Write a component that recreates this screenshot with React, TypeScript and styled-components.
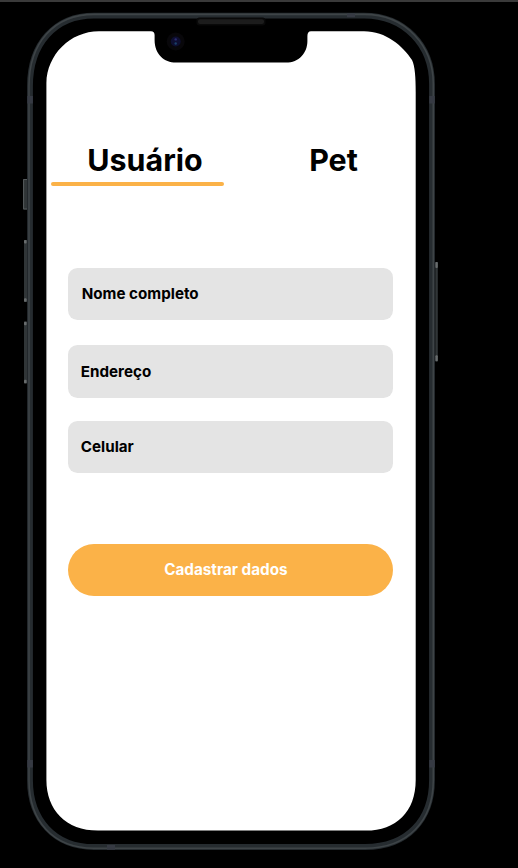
import React from "react";
import styled, { createGlobalStyle } from "styled-components";

const GlobalStyle = createGlobalStyle`
  * { box-sizing: border-box; }
  body { margin: 0; background: #000; font-family: Inter, "Liberation Sans", sans-serif; }
`;

const Stage = styled.main`
  position: relative;
  width: 518px;
  height: 868px;
  overflow: hidden;
  background: #000;
  border-top: 2px solid #3a3a3a;
  padding: 28px 0 0 46px;
`;

const Hardware = styled.svg`
  position: absolute;
  left: 0;
  top: -2px;
  pointer-events: none;
`;

const Screen = styled.section`
  position: relative;
  width: 370px;
  height: 801px;
  background: #fff;
  clip-path: path("M0.4 53 C0.8 25 24 1.2 53 1.2 H105 Q108.6 1.2 108.6 5 V10 C108.6 24 118 32.6 130 32.6 H240 C253 32.6 261.4 23 261.4 11 V6 Q261.4 1.2 265 1.2 H318 C340 1.2 357 16 366 30 C369 36 369.7 48 369.7 62 V750 C369.7 782 350 800.6 320 800.6 H52 C20 800.6 0.4 780 0.4 750 Z");
  display: flex;
  flex-direction: column;
  padding: 113px 22px 0 5px;
`;

const Tabs = styled.nav`
  display: flex;
  gap: 28px;
`;

const Tab = styled.button<{ $active?: boolean }>`
  flex: none;
  width: ${(p) => (p.$active ? 173 : 163)}px;
  height: 43px;
  border: 0;
  padding: 0;
  background: none;
  color: #000;
  font: 700 30.4px/34px Inter, sans-serif;
  display: flex;
  flex-direction: column;
  align-items: center;
  justify-content: space-between;

  span { padding-left: ${(p) => (p.$active ? 15 : 0)}px; }

  &::after {
    content: "";
    width: 100%;
    height: 4px;
    border-radius: 2px;
    background: ${(p) => (p.$active ? "#fbb248" : "transparent")};
  }
`;

const Form = styled.form`
  display: flex;
  flex-direction: column;
  width: 324.5px;
  margin: 81.6px 0 0 17.4px;
`;

const Field = styled.label<{ $gap: number; $inset: number }>`
  display: flex;
  align-items: center;
  height: 52.2px;
  margin-bottom: ${(p) => p.$gap}px;
  padding-left: ${(p) => p.$inset}px;
  border-radius: 9.5px;
  background: #e4e4e4;
  color: #000;
  font: 700 15.2px/20px Inter, sans-serif;
`;

const Submit = styled.button`
  height: 52.2px;
  padding: 0 9.5px 0 0;
  border: 0;
  border-radius: 27px;
  background: #fbb248;
  color: #fff;
  font: 700 15.25px/20px Inter, sans-serif;
`;

const FRAME =
  "M30 86 C30 44 55 15.6 94 15.6 H364 C405 15.6 432 46 432 84 V780 C432 819 408 847 365 847 H94 C54 847 30 819 30 780 Z";
const FRAME_EDGE =
  "M29 86 C29 43 54 14.4 94 14.4 H364 C406 14.4 433.3 46 433.3 84 V780 C433.3 821 408 848.2 365 848.2 H94 C53 848.2 29 821 29 780 Z";

function PhoneHardware() {
  return (
    <Hardware width="518" height="868" viewBox="0 0 518 868" fill="none" aria-hidden="true">
      <path d={FRAME} stroke="#262c30" strokeWidth="5.8" />
      <path d={FRAME_EDGE} stroke="#3e4447" strokeWidth="1.6" />
      {/* antenna bands */}
      <g fill="#363a43">
        <rect x="27.3" y="96" width="5.6" height="7.5" />
        <rect x="429.3" y="96" width="5.5" height="7.5" />
        <rect x="27.3" y="760" width="5.6" height="7.5" />
        <rect x="429.3" y="760" width="5.5" height="7.5" />
        <rect x="347" y="13.2" width="8" height="4" />
        <rect x="107" y="845" width="8" height="4.8" />
      </g>
      {/* side buttons */}
      <g fill="#303537">
        <rect x="23" y="179" width="4" height="30.5" />
        <rect x="24" y="240" width="3" height="62" />
        <rect x="24" y="321.5" width="3" height="62" />
        <rect x="435.3" y="262" width="2.5" height="99.5" />
      </g>
      <path d="M27 179.5H23.6V209H27" stroke="#555a5c" />
      <g fill="#686c6d">
        <rect x="24" y="240" width="2.6" height="3.5" rx="1" />
        <rect x="24" y="298.3" width="2.6" height="3.5" rx="1" />
        <rect x="24" y="321.8" width="2.6" height="3.5" rx="1" />
        <rect x="24" y="379.7" width="2.6" height="3.5" rx="1" />
        <rect x="435.4" y="262" width="2.4" height="6" rx="1" />
        <rect x="435.4" y="355.3" width="2.4" height="6" rx="1" />
      </g>
      {/* speaker and camera */}
      <rect x="196.5" y="17.5" width="69" height="8" rx="3" fill="#090909" />
      <rect x="198" y="19.2" width="66" height="4.8" rx="2" fill="#1c1c1c" />
      <circle cx="175.7" cy="41.5" r="9" fill="#08070a" />
      <circle cx="175.7" cy="41.5" r="5" fill="#0d0e30" />
      <circle cx="175.7" cy="39.4" r="1.2" fill="#2b2b70" />
      <circle cx="175.7" cy="43.5" r="1.2" fill="#1a4068" />
    </Hardware>
  );
}

export default function App() {
  return (
    <>
      <GlobalStyle />
      <Stage>
        <PhoneHardware />
        <Screen>
          <Tabs>
            <Tab $active type="button"><span>Usuário</span></Tab>
            <Tab type="button"><span>Pet</span></Tab>
          </Tabs>
          <Form>
            <Field $gap={25.7} $inset={13.3}>Nome completo</Field>
            <Field $gap={23} $inset={12.4}>Endereço</Field>
            <Field $gap={70.8} $inset={12.4}>Celular</Field>
            <Submit type="button">Cadastrar dados</Submit>
          </Form>
        </Screen>
      </Stage>
    </>
  );
}
